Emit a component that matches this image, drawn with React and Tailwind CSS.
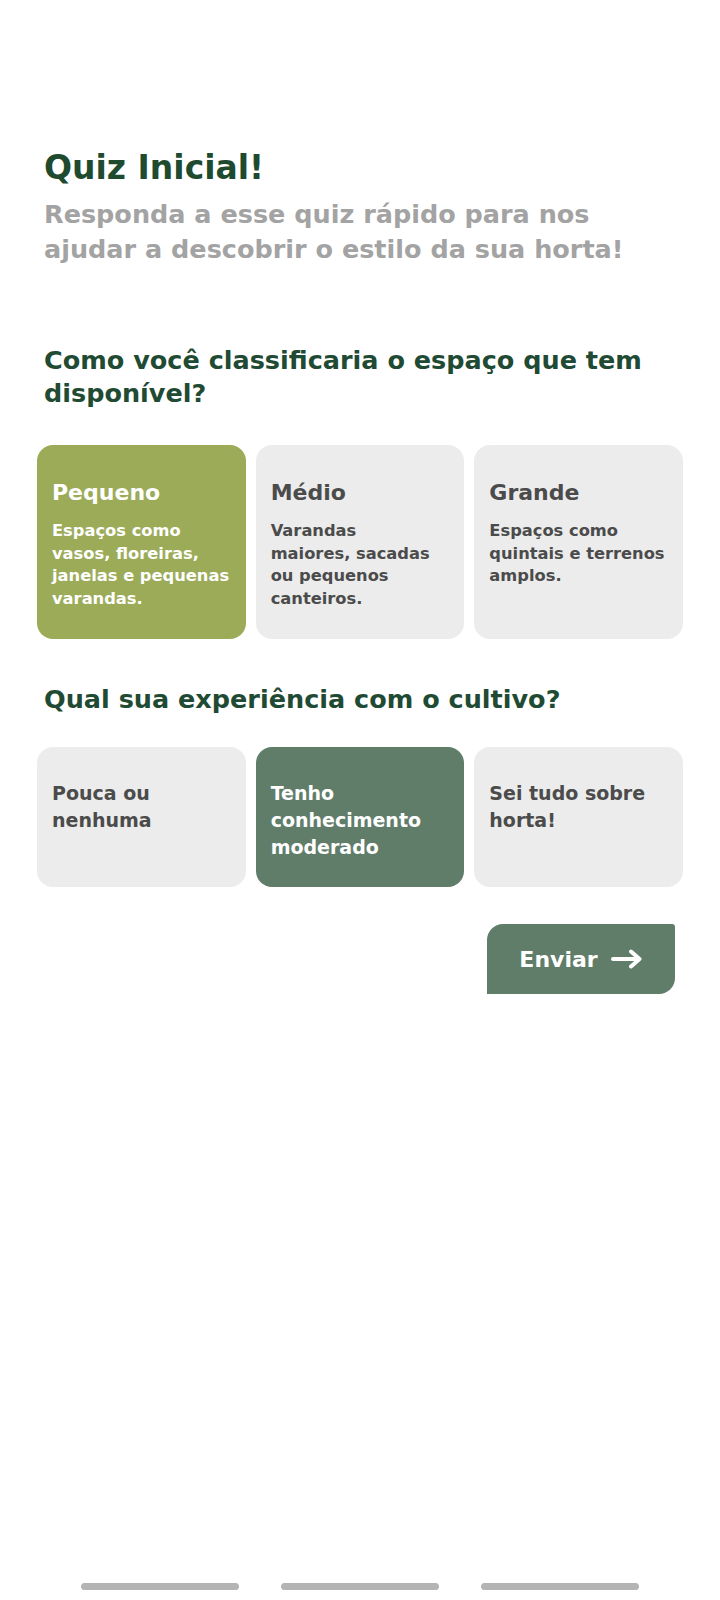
import { useState } from "react";

const espacos = [
  {
    id: "pequeno",
    titulo: "Pequeno",
    linhas: ["Espaços como", "vasos, floreiras,", "janelas e pequenas", "varandas."],
  },
  {
    id: "medio",
    titulo: "Médio",
    linhas: ["Varandas", "maiores, sacadas", "ou pequenos", "canteiros."],
  },
  {
    id: "grande",
    titulo: "Grande",
    linhas: ["Espaços como", "quintais e terrenos", "amplos."],
  },
];

const experiencias = [
  { id: "pouca", linhas: ["Pouca ou", "nenhuma"] },
  { id: "moderado", linhas: ["Tenho", "conhecimento", "moderado"] },
  { id: "tudo", linhas: ["Sei tudo sobre", "horta!"] },
];

// Quebra as linhas do texto do jeito que aparece no layout
function Linhas({ linhas }) {
  return linhas.map((l, i) => (
    <span key={i} className="block whitespace-nowrap">
      {l}
    </span>
  ));
}

function SetaDireita() {
  return (
    <svg width="32" height="20" viewBox="0 0 32 20" fill="none">
      <path
        d="M2 10H28M20 2.5L28.5 10L20 17.5"
        stroke="white"
        strokeWidth="4"
        strokeLinecap="round"
        strokeLinejoin="round"
      />
    </svg>
  );
}

function QuizInicial() {
  const [espaco, setEspaco] = useState("pequeno");
  const [experiencia, setExperiencia] = useState("moderado");

  return (
    <div className="min-h-[1600px] w-full bg-white flex flex-col font-['DejaVu_Sans',sans-serif] font-bold">
      <main className="px-[37px] pt-[148px]">
        <h1 className="pl-[7px] text-[33px] leading-[40px] text-[#1e4a2f]">
          Quiz Inicial!
        </h1>
        <p className="pl-[7px] mt-[9px] text-[25.5px] leading-[35px] text-[#a3a3a3]">
          Responda a esse quiz rápido para nos
          <br />
          ajudar a descobrir o estilo da sua horta!
        </p>

        <h2 className="pl-[7px] mt-[77px] text-[25.5px] leading-[33px] text-[#1f4a33]">
          Como você classificaria o espaço que tem
          <br />
          disponível?
        </h2>
        <div className="mt-[35px] grid grid-cols-3 gap-[10px]">
          {espacos.map((e) => {
            const ativo = espaco === e.id;
            return (
              <button
                key={e.id}
                onClick={() => setEspaco(e.id)}
                className={
                  ativo
                    ? "h-[194px] rounded-[16px] bg-[#9cab58] text-white text-left flex flex-col pt-[34px] pl-[15px] pr-[6px]"
                    : "h-[194px] rounded-[16px] bg-[#ececec] text-[#4b4b4b] text-left flex flex-col pt-[34px] pl-[15px] pr-[6px]"
                }
              >
                <span className="text-[22px] leading-[28px]">{e.titulo}</span>
                <span className="mt-[13px] text-[16.3px] leading-[22.5px]">
                  <Linhas linhas={e.linhas} />
                </span>
              </button>
            );
          })}
        </div>

        <h2 className="pl-[7px] mt-[44px] text-[25.5px] leading-[33px] text-[#1f4a33]">
          Qual sua experiência com o cultivo?
        </h2>
        <div className="mt-[31px] grid grid-cols-3 gap-[10px]">
          {experiencias.map((e) => {
            const ativo = experiencia === e.id;
            return (
              <button
                key={e.id}
                onClick={() => setExperiencia(e.id)}
                className={
                  ativo
                    ? "h-[140px] rounded-[16px] bg-[#607d6a] text-white text-left flex flex-col pt-[33px] pl-[15px] pr-[6px] text-[19px] leading-[27px]"
                    : "h-[140px] rounded-[16px] bg-[#ececec] text-[#4b4b4b] text-left flex flex-col pt-[33px] pl-[15px] pr-[6px] text-[19px] leading-[27px]"
                }
              >
                <Linhas linhas={e.linhas} />
              </button>
            );
          })}
        </div>

        <div className="mt-[37px] flex justify-end pr-[8px]">
          <button className="w-[188px] h-[70px] rounded-tl-[16px] rounded-br-[16px] rounded-tr-[3px] bg-[#607d6a] text-white text-[22px] flex items-center justify-center gap-[13px]">
            Enviar
            <SetaDireita />
          </button>
        </div>
      </main>

      <div className="mt-auto pb-[10px] flex justify-center gap-[42px]">
        <div className="w-[158px] h-[7px] rounded-full bg-[#b4b4b4]"></div>
        <div className="w-[158px] h-[7px] rounded-full bg-[#b4b4b4]"></div>
        <div className="w-[158px] h-[7px] rounded-full bg-[#b4b4b4]"></div>
      </div>
    </div>
  );
}

export default QuizInicial;
